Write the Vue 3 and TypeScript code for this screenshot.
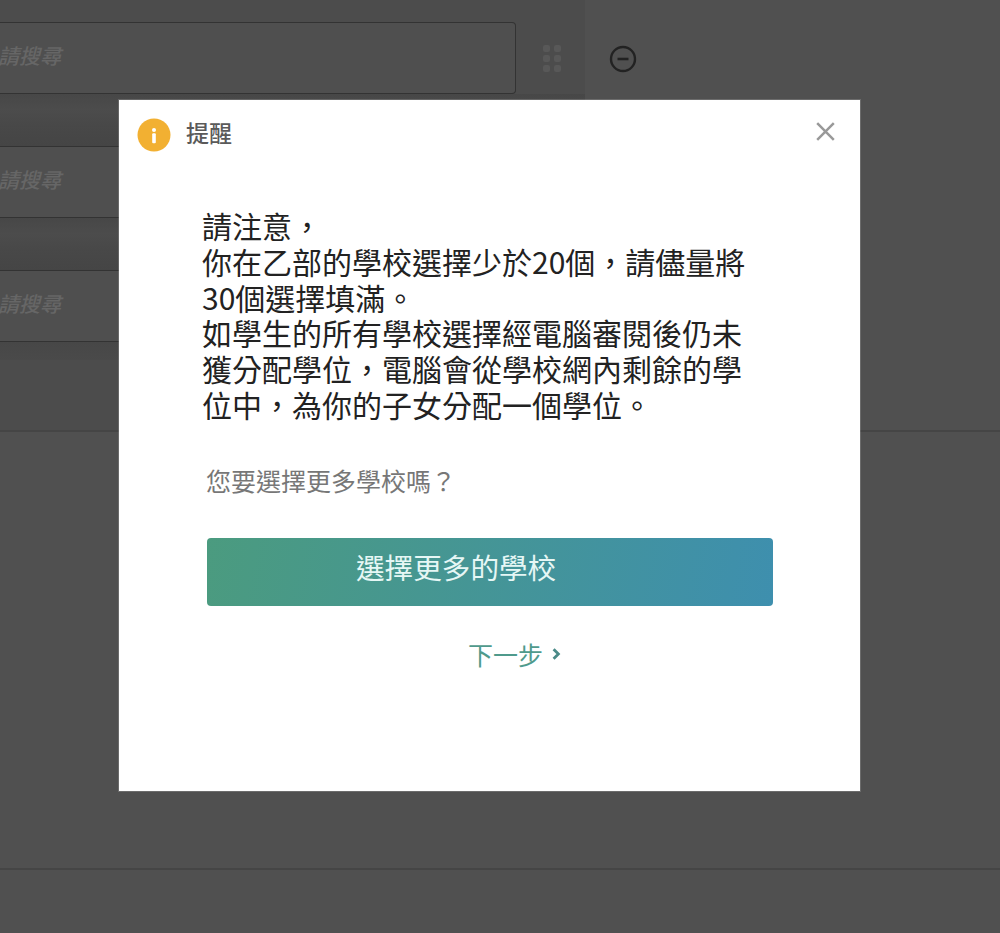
<script setup lang="ts">
const rows = [0, 1, 2]
const lines = [
  '請注意，',
  '你在乙部的學校選擇少於20個，請儘量將',
  '30個選擇填滿。',
  '如學生的所有學校選擇經電腦審閱後仍未',
  '獲分配學位，電腦會從學校網內剩餘的學',
  '位中，為你的子女分配一個學位。',
]
</script>

<template>
  <div class="page" lang="zh-TW">
    <div class="backdrop">
      <div class="left-col">
        <template v-for="r in rows" :key="r">
          <div class="search"><span>請搜尋</span></div>
          <div class="band" :class="{ last: r === 2 }"></div>
        </template>
      </div>
      <div class="handle">
        <i v-for="n in 6" :key="n"></i>
      </div>
      <svg class="minus" viewBox="0 0 28 28" width="28" height="28" aria-hidden="true">
        <circle cx="14" cy="14" r="12" fill="none" stroke="#222" stroke-width="2.4" />
        <path d="M8.5 14h11" stroke="#222" stroke-width="2.6" />
      </svg>
      <div class="rule one"></div>
      <div class="rule two"></div>
    </div>

    <section class="modal">
      <header class="head">
        <svg class="info" viewBox="0 0 34 34" width="34" height="34" aria-hidden="true">
          <circle cx="17" cy="17" r="16.5" fill="#f2b032" />
          <circle cx="17" cy="12" r="2" fill="#fff" />
          <rect x="15.2" y="15.2" width="3.6" height="10" rx="1" fill="#fff" />
        </svg>
        <h2>提醒</h2>
        <svg class="close" viewBox="0 0 19 19" width="19" height="19" aria-hidden="true">
          <path d="M1.2 1.2l16.6 16.6M17.8 1.2L1.2 17.8" stroke="#999" stroke-width="2.5" />
        </svg>
      </header>
      <div class="body">
        <p v-for="l in lines" :key="l">{{ l }}</p>
      </div>
      <p class="ask">您要選擇更多學校嗎？</p>
      <button class="primary"><span>選擇更多的學校</span></button>
      <a class="next">
        <span>下一步</span>
        <svg viewBox="0 0 9 12" width="9" height="12" aria-hidden="true">
          <path d="M1.6 1.2l4.8 4.8-4.8 4.8" fill="none" stroke="#4a8a88" stroke-width="2.8" />
        </svg>
      </a>
    </section>
  </div>
</template>

<style scoped>
.page {
  position: relative;
  width: 1000px;
  height: 933px;
  overflow: hidden;
  background: #505050;
  font-family: "Noto Sans CJK TC", "Liberation Sans", sans-serif;
  font-feature-settings: "locl";
}
.backdrop {
  position: absolute;
  inset: 0;
}
.left-col {
  position: absolute;
  left: 0;
  top: 0;
  width: 585px;
  height: 430px;
  background: #4c4c4c;
  padding-top: 22px;
  box-sizing: border-box;
}
.search {
  width: 516px;
  height: 72px;
  box-sizing: border-box;
  border: 1.5px solid #333;
  border-left: 0;
  border-radius: 0 4px 4px 0;
  background: #4f4f4f;
  display: flex;
  align-items: center;
}
.search span {
  margin-left: -2px;
  margin-top: -6px;
  font-style: italic;
  font-weight: 500;
  font-size: 21px;
  color: #666;
  white-space: nowrap;
}
.band {
  height: 52px;
  background: linear-gradient(180deg, #474747 0%, #4c4c4c 30%, #484848 60%, #454545 100%);
}
.band.last {
  height: 18px;
  background: linear-gradient(180deg, #474747, #4a4a4a);
}
.handle {
  position: absolute;
  left: 543px;
  top: 45px;
  display: grid;
  grid-template-columns: 7px 7px;
  gap: 3px 4px;
}
.handle i {
  width: 7px;
  height: 7px;
  border-radius: 2px;
  background: #585858;
}
.minus {
  position: absolute;
  left: 609px;
  top: 45px;
}
.rule {
  position: absolute;
  left: 0;
  right: 0;
  height: 2px;
  background: #454545;
}
.rule.one { top: 430px; }
.rule.two { top: 868px; }
.modal {
  position: absolute;
  left: 119px;
  top: 100px;
  width: 741px;
  height: 691px;
  background: #fff;
  box-sizing: border-box;
  padding: 0 87px 0 88px;
  box-shadow: 0 0 0 1px rgba(190, 190, 190, 0.25);
}
.head {
  position: absolute;
  left: 18px;
  right: 25px;
  top: 17px;
  display: flex;
  align-items: center;
  gap: 15px;
}
.head h2 {
  margin: 0 0 5px;
  font-size: 23px;
  line-height: 30px;
  font-weight: 500;
  color: #5a5a5a;
}
.close {
  margin-left: auto;
  margin-top: -6px;
}
.body {
  margin-top: 108px;
  margin-left: -5px;
}
.body p {
  margin: 0;
  font-size: 30px;
  line-height: 35.8px;
  color: #222;
  white-space: nowrap;
}
.ask {
  margin: 40px 0 0 -1px;
  font-size: 25px;
  line-height: 34px;
  color: #777;
  white-space: nowrap;
}
.primary {
  display: flex;
  align-items: center;
  width: 566px;
  height: 68px;
  margin-top: 41px;
  padding: 0 0 11px 149px;
  border: 0;
  border-radius: 4px;
  background: linear-gradient(100deg, #4b9b7f, #3e8fae);
  color: #e6f7f5;
  font: inherit;
  font-size: 28.6px;
}
.next {
  display: flex;
  align-items: center;
  gap: 9px;
  margin-top: 31px;
  padding-left: 261px;
  font-size: 25px;
  line-height: 34px;
  color: #4f9a8c;
}
</style>
